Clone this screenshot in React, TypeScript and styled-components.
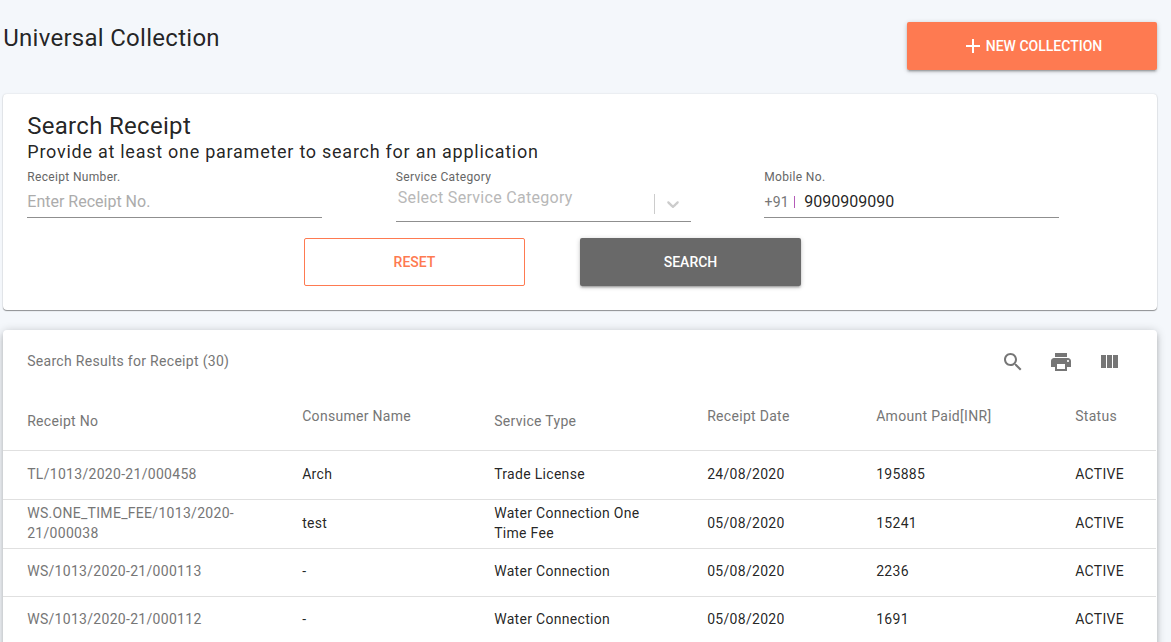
import React from "react";
import styled, { createGlobalStyle } from "styled-components";

const GlobalStyle = createGlobalStyle`
  *, *::before, *::after { box-sizing: border-box; }
  html, body { height: 100%; overflow: hidden; }
  body {
    margin: 0;
    background: #f4f7fb;
    font-family: Roboto, "Liberation Sans", sans-serif;
    color: rgba(0, 0, 0, 0.87);
  }
`;

const Page = styled.div`
  height: 642px;
  padding: 22px 14px 0 3px;
  overflow: hidden;
`;

const PageHeader = styled.header`
  display: flex;
  justify-content: space-between;
  align-items: flex-start;
  height: 72px;
`;

const PageTitle = styled.h1`
  margin: 0;
  padding-left: 0.2px;
  font-size: 24px;
  font-weight: 400;
  line-height: 32px;
  letter-spacing: 0.28px;
`;

const Button = styled.button<{ $kind: "primary" | "outline" | "dark" }>`
  display: flex;
  align-items: center;
  justify-content: center;
  width: ${(p) => (p.$kind === "primary" ? 250 : 221)}px;
  height: 48px;
  padding: 0;
  border: ${(p) => (p.$kind === "outline" ? "1px solid #fe7a51" : "0")};
  border-radius: 2px;
  background: ${(p) => ({ primary: "#fe7a51", outline: "#fff", dark: "#696969" })[p.$kind]};
  color: ${(p) => (p.$kind === "outline" ? "#fe7a51" : "#fff")};
  box-shadow: ${(p) =>
    p.$kind === "outline"
      ? "none"
      : "0 1px 5px rgba(0,0,0,.2), 0 2px 2px rgba(0,0,0,.14), 0 3px 1px -2px rgba(0,0,0,.12)"};
  font: 500 14px/20px Roboto, sans-serif;
`;

const Card = styled.section`
  border-radius: 4px;
  background: #fff;
`;

const SearchCard = styled(Card)`
  height: 216px;
  padding: 16px 24px 0;
  box-shadow: 0 1px 1px rgba(0, 0, 0, 0.4), 0 0 2px rgba(0, 0, 0, 0.14);
`;

const CardTitle = styled.h2`
  margin: 0;
  padding-left: 0.2px;
  font-size: 24px;
  font-weight: 400;
  line-height: 32px;
  letter-spacing: 0.3px;
`;

const CardHint = styled.p`
  margin: 0;
  padding-left: 0.3px;
  font-size: 18px;
  line-height: 20px;
  letter-spacing: 0.74px;
`;

const Fields = styled.div`
  display: grid;
  grid-template-columns: repeat(3, 295px);
  column-gap: 73.5px;
  height: 76px;
  padding-top: 6px;
  align-items: start;
`;

const Label = styled.label`
  display: block;
  padding-left: 0.3px;
  font-size: 12px;
  font-weight: 400;
  line-height: 18px;
  letter-spacing: 0.33px;
  color: #666;
`;

const Control = styled.div<{ $select?: boolean }>`
  display: flex;
  align-items: ${(p) => (p.$select ? "flex-start" : "center")};
  height: ${(p) => (p.$select ? 36 : 32)}px;
  border-bottom: 1px solid #8f8f8f;
  font-size: 16px;
`;

const Placeholder = styled.span<{ $select?: boolean }>`
  flex: 1;
  padding-left: ${(p) => (p.$select ? 2.3 : 0.3)}px;
  line-height: 24px;
  letter-spacing: ${(p) => (p.$select ? 0.3 : 0)}px;
  color: ${(p) => (p.$select ? "#b8b8b8" : "#acacac")};
`;

const SelectIndicator = styled.span`
  display: flex;
  align-items: center;
  justify-content: center;
  width: 37px;
  height: 20px;
  margin-top: 8px;
  border-left: 1px solid #ccc;
  color: #ccc;
`;

const DialCode = styled.span`
  width: 29px;
  padding-left: 0.4px;
  font-size: 14px;
  letter-spacing: 0.3px;
  color: #767676;
`;

const DialDivider = styled.span`
  width: 1px;
  height: 12px;
  margin: 1px 9.3px 0 1px;
  background: #b45ab8;
`;

const Actions = styled.div`
  display: flex;
  justify-content: center;
  gap: 55px;
  padding-right: 55px;
`;

const ResultsCard = styled(Card)`
  height: 400px;
  margin-top: 20px;
  box-shadow: 0 1px 10px rgba(0, 0, 0, 0.2), 0 4px 5px rgba(0, 0, 0, 0.14);
`;

const Toolbar = styled.div`
  display: flex;
  align-items: center;
  height: 63px;
  padding: 0 36px 0 24px;
  color: #767676;
`;

const ToolbarTitle = styled.span`
  flex: 1;
  padding: 0 0 2px 0.2px;
  font-size: 14px;
  letter-spacing: 0.3px;
`;

const Tools = styled.div`
  display: flex;
  gap: 24px;
`;

const Icon = styled.svg`
  display: block;
  fill: currentColor;
`;

const AddIcon = styled(Icon)`
  margin: 0 0.4px 0 -0.4px;
`;

const Table = styled.table`
  width: 1153px;
  border-collapse: collapse;
  table-layout: fixed;
  font-size: 14px;
  line-height: 20px;
  letter-spacing: 0.3px;
`;

const HeadCell = styled.th<{ $low?: boolean }>`
  height: 57px;
  padding: 0 0 ${(p) => (p.$low ? 1 : 11)}px 24.2px;
  border-bottom: 1px solid #e0e0e0;
  font-weight: 400;
  text-align: left;
  vertical-align: middle;
  white-space: nowrap;
  color: #767676;
`;

const Row = styled.tr<{ $height: number }>`
  height: ${(p) => p.$height}px;
`;

const Cell = styled.td<{ $link?: boolean }>`
  padding: 0 24px 2px 24.2px;
  border-bottom: 1px solid #e0e0e0;
  color: ${(p) => (p.$link ? "#767676" : "rgba(0, 0, 0, 0.87)")};
  white-space: pre-line;
`;

const toolIcons = [
  { name: "Search", d: "M15.5 14h-.79l-.28-.27C15.41 12.59 16 11.11 16 9.5 16 5.91 13.09 3 9.5 3S3 5.91 3 9.5 5.91 16 9.5 16c1.61 0 3.09-.59 4.23-1.57l.27.28v.79l5 4.99L20.49 19l-4.99-5zm-6 0C7.01 14 5 11.99 5 9.5S7.01 5 9.5 5 14 7.01 14 9.5 11.99 14 9.5 14z" },
  { name: "Print", d: "M19 8H5c-1.66 0-3 1.34-3 3v6h4v4h12v-4h4v-6c0-1.66-1.34-3-3-3zm-3 11H8v-5h8v5zm3-7c-.55 0-1-.45-1-1s.45-1 1-1 1 .45 1 1-.45 1-1 1zm-1-9H6v4h12V3z" },
  { name: "View columns", d: "M10 18h5V5h-5v13zm-6 0h5V5H4v13zM16 5v13h5V5h-5z" },
];

const columns = [
  { title: "Receipt No", width: 275, low: true },
  { title: "Consumer Name", width: 192 },
  { title: "Service Type", width: 213, low: true },
  { title: "Receipt Date", width: 169 },
  { title: "Amount Paid[INR]", width: 199 },
  { title: "Status", width: 105 },
];

const rows = [
  { height: 49, cells: ["TL/1013/2020-21/000458", "Arch", "Trade License", "24/08/2020", "195885", "ACTIVE"] },
  { height: 49, cells: ["WS.ONE_TIME_FEE/1013/2020-\n21/000038", "test", "Water Connection One\nTime Fee", "05/08/2020", "15241", "ACTIVE"] },
  { height: 48, cells: ["WS/1013/2020-21/000113", "-", "Water Connection", "05/08/2020", "2236", "ACTIVE"] },
  { height: 48, cells: ["WS/1013/2020-21/000112", "-", "Water Connection", "05/08/2020", "1691", "ACTIVE"] },
];

export default function App() {
  return (
    <Page>
      <GlobalStyle />
      <PageHeader>
        <PageTitle>Universal Collection</PageTitle>
        <Button $kind="primary">
          <AddIcon width="24" height="24" viewBox="0 0 24 24">
            <path d="M19 13h-6v6h-2v-6H5v-2h6V5h2v6h6v2z" />
          </AddIcon>
          NEW COLLECTION
        </Button>
      </PageHeader>

      <SearchCard>
        <CardTitle>Search Receipt</CardTitle>
        <CardHint>Provide at least one parameter to search for an application</CardHint>
        <Fields>
          <div>
            <Label>Receipt Number.</Label>
            <Control>
              <Placeholder>Enter Receipt No.</Placeholder>
            </Control>
          </div>
          <div>
            <Label>Service Category</Label>
            <Control $select>
              <Placeholder $select>Select Service Category</Placeholder>
              <SelectIndicator>
                <Icon width="20" height="20" viewBox="0 0 20 20">
                  <path d="M4.516 7.548c0.436-0.446 1.043-0.481 1.576 0l3.908 3.747 3.908-3.747c0.533-0.481 1.141-0.446 1.574 0 0.436 0.445 0.408 1.197 0 1.615-0.406 0.418-4.695 4.502-4.695 4.502-0.217 0.223-0.502 0.335-0.787 0.335s-0.57-0.112-0.789-0.335c0 0-4.287-4.084-4.695-4.502s-0.436-1.17 0-1.615z" />
                </Icon>
              </SelectIndicator>
            </Control>
          </div>
          <div>
            <Label>Mobile No.</Label>
            <Control>
              <DialCode>+91</DialCode>
              <DialDivider />
              <span>9090909090</span>
            </Control>
          </div>
        </Fields>
        <Actions>
          <Button $kind="outline">RESET</Button>
          <Button $kind="dark">SEARCH</Button>
        </Actions>
      </SearchCard>

      <ResultsCard>
        <Toolbar>
          <ToolbarTitle>Search Results for Receipt (30)</ToolbarTitle>
          <Tools>
            {toolIcons.map((icon) => (
              <Icon key={icon.name} width="24" height="24" viewBox="0 0 24 24" aria-label={icon.name}>
                <path d={icon.d} />
              </Icon>
            ))}
          </Tools>
        </Toolbar>
        <Table>
          <colgroup>
            {columns.map((c) => (
              <col key={c.title} width={c.width} />
            ))}
          </colgroup>
          <thead>
            <tr>
              {columns.map((c) => (
                <HeadCell key={c.title} $low={c.low}>
                  {c.title}
                </HeadCell>
              ))}
            </tr>
          </thead>
          <tbody>
            {rows.map((r) => (
              <Row key={r.cells[0]} $height={r.height}>
                {r.cells.map((text, i) => (
                  <Cell key={i} $link={i === 0}>
                    {text}
                  </Cell>
                ))}
              </Row>
            ))}
          </tbody>
        </Table>
      </ResultsCard>
    </Page>
  );
}
